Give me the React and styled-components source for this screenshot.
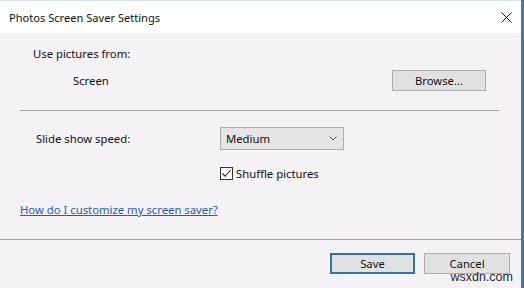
import styled, { createGlobalStyle } from "styled-components";

const GlobalStyle = createGlobalStyle`
  html, body { margin: 0; padding: 0; }
  body {
    background: #3b7bb0;
    font-family: "Noto Sans", "Open Sans", sans-serif;
    overflow: hidden;
  }
`;

const Window = styled.div`
  position: relative;
  width: 521px;
  height: 288px;
  background: #f4f2f5;
  display: flex;
  flex-direction: column;
  font-size: 11.3px;
  color: #111;
`;

const TitleBar = styled.div`
  height: 32px;
  border-top: 1px solid #d9e2ea;
  background: #fff;
  display: flex;
  align-items: center;
  justify-content: space-between;
  padding-left: 9px;
  font-size: 11.1px;
`;

const Close = styled.div`
  width: 11px;
  height: 11px;
  margin-right: 9px;
  display: flex;
`;

const Body = styled.div`
  padding: 0 22px 0 20px;
  display: flex;
  flex-direction: column;
`;

const Label = styled.div`
  line-height: 16px;
  padding-left: ${(p) => p.$indent || 0}px;
  margin-top: ${(p) => p.$top || 0}px;
`;

const SourceRow = styled.div`
  margin-top: 8px;
  height: 21px;
  display: flex;
  align-items: center;
  padding-left: 53px;
  padding-right: 13px;
`;

const Button = styled.button`
  font: inherit;
  color: #111;
  width: ${(p) => p.$w}px;
  height: 21px;
  margin-left: ${(p) => (p.$push ? "auto" : "0")};
  background: #e1e1e1;
  border: ${(p) => (p.$primary ? "2px solid #3273a8" : "1px solid #adadad")};
  padding: 0;
  line-height: 1;
  cursor: default;
`;

const Divider = styled.div`
  height: 1px;
  background: #a3a3a3;
  margin-top: ${(p) => p.$top}px;
`;

const SpeedRow = styled.div`
  margin-top: 16px;
  height: 23px;
  display: grid;
  grid-template-columns: 200px 124px;
  align-items: center;
`;

const Select = styled.div`
  height: 23px;
  box-sizing: border-box;
  border: 1px solid #adadad;
  background: #e5e5e5;
  display: flex;
  align-items: center;
  justify-content: space-between;
  padding: 0 6px 0 5px;
`;

const CheckRow = styled.div`
  margin-top: 15px;
  height: 16px;
  padding-left: 200px;
  display: flex;
  align-items: center;
  gap: 3px;
`;

const Box = styled.div`
  width: 13px;
  height: 13px;
  box-sizing: border-box;
  border: 1px solid #333;
  background: #fff;
  display: flex;
  align-items: center;
  justify-content: center;
`;

const Link = styled.a`
  margin-top: 21px;
  line-height: 16px;
  color: #1f5fa6;
  text-decoration: underline;
  align-self: flex-start;
`;

const Footer = styled.div`
  display: flex;
  justify-content: flex-end;
  gap: 9px;
  padding: 13px 11px 0 0;
`;

const Watermark = styled.div`
  position: absolute;
  right: 8px;
  bottom: 4px;
  font-family: "Liberation Sans", Arial, sans-serif;
  font-size: 12.5px;
  line-height: 14px;
  color: #262626;
`;

export default function App() {
  return (
    <>
      <GlobalStyle />
      <Window>
        <TitleBar>
          <span>Photos Screen Saver Settings</span>
          <Close>
            <svg width="11" height="11" viewBox="0 0 11 11">
              <path d="M0.5 0.5 L10.5 10.5 M10.5 0.5 L0.5 10.5" stroke="#111" strokeWidth="1" />
            </svg>
          </Close>
        </TitleBar>
        <Body>
          <Label $indent={13} $top={13}>Use pictures from:</Label>
          <SourceRow>
            <span>Screen</span>
            <Button $w={94} $push>Browse...</Button>
          </SourceRow>
          <Divider $top={19} />
          <SpeedRow>
            <Label $indent={16}>Slide show speed:</Label>
            <Select>
              <span>Medium</span>
              <svg width="8" height="5" viewBox="0 0 8 5">
                <path d="M0.5 0.5 L4 4 L7.5 0.5" fill="none" stroke="#555" strokeWidth="1" />
              </svg>
            </Select>
          </SpeedRow>
          <CheckRow>
            <Box>
              <svg width="11" height="11" viewBox="0 0 11 11">
                <path d="M1.5 5.5 L4.2 8.3 L9.5 2" fill="none" stroke="#222" strokeWidth="1.1" />
              </svg>
            </Box>
            <span>Shuffle pictures</span>
          </CheckRow>
          <Link href="#">How do I customize my screen saver?</Link>
        </Body>
        <Divider $top={21} />
        <Footer>
          <Button $w={85} $primary>Save</Button>
          <Button $w={86}>Cancel</Button>
        </Footer>
        <Watermark>wsxdn.com</Watermark>
      </Window>
    </>
  );
}
